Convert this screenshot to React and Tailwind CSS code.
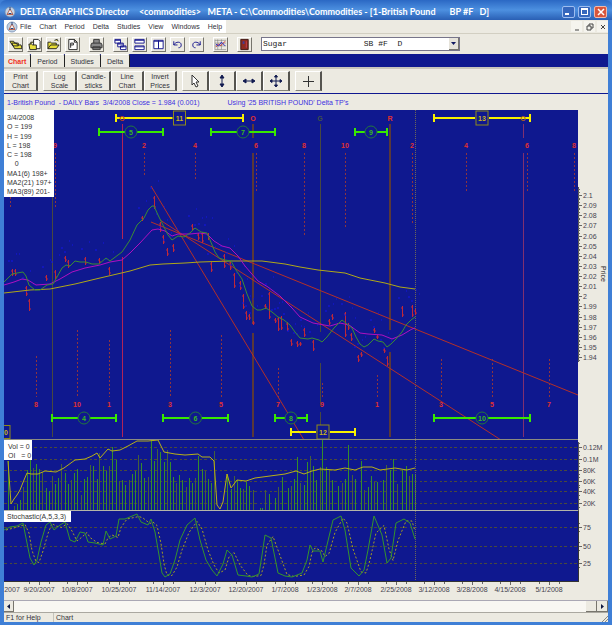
import React from 'react';

const UI_FONT = "font-['Liberation_Sans',Arial,sans-serif]";

const MENU_ITEMS = ['File', 'Chart', 'Period', 'Delta', 'Studies', 'View', 'Windows', 'Help'];

// Price scale, from 2.1 down to 1.94
const PRICE_LABELS = ['2.1', '2.09', '2.08', '2.07', '2.06', '2.05', '2.04', '2.03', '2.02', '2.01', '2', '1.99', '1.98', '1.97', '1.96', '1.95', '1.94'];

const VOLUME_SCALE = [['0.12M', 447], ['0.1M', 459], ['80K', 470], ['60K', 481], ['40K', 491], ['20K', 503]];

const STOCHASTIC_SCALE = [['75', 527], ['50', 546], ['25', 563]];

const DATES = [
  ['9/20/2007', 39], ['10/8/2007', 77], ['10/25/2007', 119], ['11/14/2007', 163], ['12/3/2007', 205],
  ['12/20/2007', 246], ['1/7/2008', 285], ['1/23/2008', 322], ['2/7/2008', 358], ['2/25/2008', 396],
  ['3/12/2008', 434], ['3/28/2008', 472], ['4/15/2008', 510], ['5/1/2008', 549]
];

// [label, x, start, end] of the dashed turning points
const TOP_POINTS = [
  ['9', 55, 153, 207], ['2', 144, 153, 176], ['4', 195, 153, 179], ['6', 256, 153, 192], ['8', 304, 153, 236],
  ['10', 345, 153, 228], ['2', 412, 153, 225], ['4', 466, 153, 192], ['6', 527, 153, 192], ['8', 574, 153, 192]
];

const BOTTOM_POINTS = [
  ['8', 36, 356], ['10', 77, 330], ['1', 109, 340], ['3', 170, 330], ['5', 221, 335], ['7', 278, 368],
  ['9', 322, 383], ['1', 377, 375], ['3', 441, 359], ['5', 492, 359], ['7', 549, 359]
];

// [label, from, to, y]
const GREEN_RANGES = [
  ['5', 99, 163, 132], ['7', 211, 275, 132], ['9', 355, 387, 132], ['4', 52, 116, 418],
  ['6', 163, 228, 418], ['8', 275, 307, 418], ['10', 434, 530, 418]
];

const YELLOW_RANGES = [['11', 116, 243, 118], ['13', 434, 530, 118], ['12', 291, 355, 432]];

const MA_FAST = '4,282 12,274 17,273 23,272 26,276 29,285 35,290 40,290 47,285 53,284 57,277 62,268 66,265 70,266 75,261 80,262 86,262 92,264 99,264 106,258 110,261 122,252 130,240 137,225 144,218 148,210 152,206 154,206 158,215 163,225 168,235 172,240 178,236 184,237 190,233 195,228 201,232 207,233 210,240 215,252 219,258 225,260 231,261 236,270 242,279 247,294 252,306 257,310 261,310 266,308 272,312 278,317 284,320 290,325 295,332 300,338 308,339 312,338 319,340 322,342 327,337 334,328 342,320 347,324 352,328 356,337 360,344 364,347 368,345 374,339 378,341 383,342 387,347 391,344 396,339 402,332 406,325 411,320 415,317';

const MA_MID = '4,285 14,282 22,279 28,280 36,285 50,284 60,279 72,272 85,268 100,265 110,262 122,260 130,253 140,243 152,230 158,229 165,231 172,236 178,234 190,234 200,233 207,234 214,241 222,246 230,248 238,256 245,266 251,273 258,281 268,287 280,296 292,308 300,317 313,323 330,326 340,323 349,325 360,333 368,334 382,335 392,339 402,335 412,329 415,328';

const MA_SLOW = '4,293 30,290 50,289 75,284 100,278 130,271 150,265 163,264 185,263 200,262 230,261 262,261 285,264 300,267 318,270 345,273 360,278 385,283 400,287 415,289';

const OPEN_INTEREST = '8,461 11,504 14,499 17,495 20,490 24,480 27,473 31,474 38,474 45,471 56,472 64,468 75,460 85,459 92,456 97,453 100,458 108,449 112,451 120,450 128,446 137,441 148,441 158,440 164,452 175,454 185,455 198,454 202,457 210,457 214,461 217,505 220,509 223,502 227,474 231,488 237,480 246,481 255,478 270,476 285,474 296,471 304,474 312,471 320,469 335,470 345,468 355,470 363,467 372,467 380,470 395,468 407,470 415,468';

const STOCHASTIC = [
  [4, 530], [10, 527], [17, 526], [23, 523], [27, 543], [30, 558], [34, 565], [37, 560], [41, 542], [46, 525], [50, 522],
  [54, 530], [60, 525], [65, 522], [70, 540], [75, 542], [80, 532], [85, 533], [88, 542], [95, 543], [103, 545], [106, 531],
  [110, 539], [116, 536], [119, 519], [125, 519], [137, 514], [141, 522], [148, 525], [151, 519], [155, 532], [159, 555],
  [162, 573], [165, 577], [170, 574], [175, 560], [180, 540], [187, 525], [195, 518], [200, 540], [206, 560], [212, 570],
  [217, 576], [223, 564], [227, 550], [232, 555], [238, 575], [246, 576], [252, 577], [259, 574], [262, 555], [265, 535],
  [271, 538], [278, 573], [285, 576], [292, 577], [302, 573], [307, 560], [310, 545], [313, 551], [320, 551], [323, 562],
  [327, 545], [333, 520], [341, 516], [345, 530], [351, 568], [359, 576], [364, 570], [368, 550], [374, 516], [382, 535],
  [387, 563], [391, 558], [396, 523], [404, 519], [410, 523], [415, 539]
];

// [x, high, low]
const PRICE_BARS = [
  [12, 269, 276], [15, 269, 276], [26, 286, 296], [29, 299, 311], [46, 275, 281], [55, 270, 279], [65, 256, 262],
  [68, 260, 268], [85, 257, 265], [99, 258, 264], [109, 267, 275], [142, 216, 221], [154, 196, 209], [160, 222, 232],
  [163, 235, 244], [167, 248, 256], [173, 244, 252], [192, 224, 231], [198, 233, 240], [202, 232, 243], [208, 233, 240],
  [211, 262, 272], [224, 254, 268], [230, 261, 270], [234, 273, 288], [240, 281, 290], [243, 294, 309], [246, 311, 320],
  [249, 314, 320], [253, 321, 325], [265, 304, 309], [269, 292, 319], [275, 318, 323], [278, 317, 331], [281, 316, 330],
  [287, 322, 331], [291, 339, 346], [297, 341, 347], [300, 342, 346], [304, 328, 337], [313, 340, 351], [329, 319, 325],
  [332, 314, 320], [345, 312, 337], [348, 323, 330], [351, 333, 341], [358, 355, 362], [361, 352, 357], [374, 328, 333],
  [377, 335, 339], [384, 348, 353], [387, 356, 366], [402, 306, 317], [412, 305, 317], [415, 309, 315]
];

// [x, top]
const VOLUME_BARS = [
  [8, 461], [14, 506], [17, 504], [20, 500], [23, 487], [27, 470], [30, 460], [33, 468], [36, 464], [39, 469], [42, 472],
  [46, 488], [49, 491], [52, 476], [55, 484], [58, 478], [61, 464], [65, 473], [68, 484], [71, 480], [74, 473], [77, 469],
  [81, 495], [84, 479], [87, 477], [90, 465], [93, 466], [97, 479], [99, 453], [103, 466], [106, 471], [109, 466],
  [112, 447], [116, 460], [119, 481], [122, 480], [125, 485], [129, 480], [132, 474], [135, 471], [138, 455], [141, 463],
  [144, 478], [148, 477], [151, 440], [154, 461], [157, 449], [160, 452], [164, 462], [167, 450], [170, 462], [173, 477],
  [176, 483], [179, 475], [182, 480], [186, 487], [189, 478], [192, 483], [195, 478], [198, 456], [202, 469], [205, 471],
  [208, 479], [211, 483], [214, 451], [227, 474], [231, 489], [234, 476], [237, 480], [240, 488], [243, 489], [246, 482],
  [249, 486], [253, 490], [260, 508], [262, 508], [265, 490], [269, 494], [275, 498], [278, 487], [282, 477], [288, 488],
  [291, 486], [294, 479], [297, 457], [300, 483], [304, 485], [307, 462], [310, 456], [313, 466], [316, 480], [320, 467],
  [322, 440], [326, 467], [329, 470], [332, 480], [338, 486], [342, 483], [345, 479], [348, 445], [352, 475], [355, 479],
  [361, 461], [364, 490], [368, 487], [371, 476], [374, 482], [377, 482], [383, 480], [386, 465], [390, 470], [393, 459],
  [397, 484], [402, 470], [406, 466], [409, 476], [412, 474], [415, 474]
];

const toPoints = (data) => data.map(([x, y]) => `${x},${y}`).join(' ');

// Slow line: the average of two readings, which trails the fast one
const slowLine = STOCHASTIC.map(([x, y], i) => {
  const previous = STOCHASTIC[Math.max(i - 1, 0)][1];
  return [Math.min(x + 2, 415), (y + previous) / 2];
});

const AppIcon = () => (
  <svg className="w-3 h-3 shrink-0" viewBox="0 0 12 12" fill="none">
    <circle cx="6" cy="6" r="5" fill="#c5d3e3" stroke="#6d89b0" strokeWidth="0.8" />
    <path d="M6 3 9 8.500H3z" fill="#f4f4f4" stroke="#b0472f" strokeWidth="0.8" />
    <path d="M6 1v3M4.500 7.500h3" stroke="#28477d" />
  </svg>
);

const TOOL_GROUPS = [
  [
    ['Open', <path key="p" d="M1 3h4l1 2h4v3H4zM3 5h5l1 2h4l1 4H6z" fill="#e8e03c" stroke="#222" />],
    ['Open chart', <g key="p" stroke="#222"><path d="M6 1h5l2 2v8H6z" fill="#fff" /><path d="M1 6h3l1 1h4v5H2zM3 6V4h3" fill="#e8e03c" /></g>],
    ['Open folder', <path key="p" d="M1 11V4h3l1 1h5v2M1 11l3-4h9l-3 4zM8 2l3-1 1 2" fill="#e9df35" stroke="#222" />],
    ['Page', <path key="p" d="M3 1h6l3 3v8H3zM9 1v3h3M5 10V5h3v2H5" fill="#fff" stroke="#222" />]
  ],
  [
    ['Print', <path key="p" d="M4 5V1h6v4M2 5h10l1 2v3H1V7zM3 9h8v3H3z" fill="#888" stroke="#333" />]
  ],
  [
    ['Cascade', <g key="p"><path d="M1 1h6v4H1zM4 5h6v4H4zM7 8h6v4H7z" fill="#fff" stroke="#14148c" /><path d="M1 2h6M4 6h6M7 9h6" stroke="#14148c" /></g>],
    ['Tile rows', <path key="p" d="M2 1h10v4H2zM2 8h10v4H2zM2 2h10M2 9h10" fill="#fff" stroke="#14148c" />],
    ['Tile columns', <path key="p" d="M2 2h5v9H2zM7 2h5v9H7zM2 3h10" fill="#fff" stroke="#14148c" />],
    ['Undo', <path key="p" d="M3 3v4h4M3 7c2-4 8-4 8 0 0 2-1 3-3 3" fill="none" stroke="#14148c" />],
    ['Redo', <path key="p" d="M11 3v4H7M11 7C9 3 3 3 3 7c0 2 1 3 3 3" fill="none" stroke="#14148c" />]
  ],
  [
    ['Draw chart', <g key="p" fill="none"><path d="M1 1v11h12M1 2h12M1 5h12M1 8h12M4 1v11M8 1v11" stroke="#777" strokeWidth="0.6" /><path d="m2 9 3-3 2 2 5-5" stroke="#c22" /><path d="m2 6 3 2 3-4 4 4" stroke="#22c" /></g>]
  ],
  [
    ['Exit', <g key="p"><path d="M3 1h8v11H3z" fill="#8c2a20" stroke="#3c1410" /><path d="M5 3h2v3H5zM8 8h1v1H8z" fill="#473a91" /><path d="M9 3v7" stroke="#d45" strokeWidth="0.8" /></g>]
  ]
];

const ToolButton = ({ label, children }) => (
  <button aria-label={label} className="w-[15px] h-[15px] mr-1 border-r border-b border-[#77756d] border-t border-t-white border-l border-l-white flex items-center justify-center">
    <svg className="w-[13px] h-[13px] shrink-0" viewBox="0 0 14 13">{children}</svg>
  </button>
);

const CURSOR_TOOLS = [
  ['Pointer', <path key="p" d="M5 2v10l2-2 2 4 2-1-2-4h3z" fill="#fff" stroke="#333" />],
  ['Vertical', <path key="p" d="M8 3v10M8 2 6 5h4zM8 14l2-3H6z" fill="#111a50" stroke="#111a50" />],
  ['Horizontal', <path key="p" d="M3 8h10M2 8l3 2V6zM14 8l-3-2v4z" fill="#111a50" stroke="#111a50" />],
  ['Move', <path key="p" d="M8 3v10M3 8h10M8 2 6.500 4h3zM8 14l1.500-2h-3zM2 8l2 1.500v-3zM14 8l-2-1.500v3z" fill="#111a50" stroke="#111a50" />]
];

const PushButton = ({ className = '', children, ...rest }) => (
  <button className={`h-full border-t border-l border-white border-r-2 border-r-[#55544f] border-b border-b-[#85837b] flex items-center justify-center text-center ${className}`} {...rest}>
    {children}
  </button>
);

const TitleBar = () => (
  <header className="h-5 pl-1 pr-[5px] pt-[3px] flex items-center bg-linear-to-b from-[#2b68c4] via-[#4d90e0] to-[#2a5fb4] rounded-t-md">
    <AppIcon />
    <h1 className="ml-1 flex gap-[10px] font-['Lato','Liberation_Sans',sans-serif] font-bold text-[9px] text-white whitespace-nowrap">
      <span>DELTA GRAPHICS Director</span>
      <span>&lt;commodities&gt;&nbsp;&nbsp; META - C:\Commodities\Commodities - [1-British Pound</span>
      <span className="pl-1">BP #F&nbsp;&nbsp; D]</span>
    </h1>
    <div className="ml-auto flex gap-[3px]">
      <button aria-label="Minimize" className="w-[13px] h-3 rounded-xs border border-[#9dbdf0] bg-[#3567bd] flex items-end p-[2px]">
        <span className="w-1 h-[2px] bg-white" />
      </button>
      <button aria-label="Maximize" className="w-[13px] h-3 rounded-xs border border-[#9dbdf0] bg-[#3567bd] flex items-center justify-center">
        <span className="w-[7px] h-[7px] border border-t-2 border-white" />
      </button>
      <button aria-label="Close" className="w-[13px] h-3 rounded-xs border border-[#f2b8a8] bg-[#d9553b] flex items-center justify-center">
        <svg className="w-2 h-2" viewBox="0 0 8 8"><path d="m1 1 6 6M7 1 1 7" stroke="#fff" strokeWidth="1.5" /></svg>
      </button>
    </div>
  </header>
);

const MenuBar = () => (
  <nav className="h-[13px] flex items-center">
    <div className="h-full pl-[2px] pr-1 flex items-center bg-white">
      <AppIcon />
      <div className="flex gap-2 ml-[2px]">
        {MENU_ITEMS.map((item) => (
          <button key={item}>{item}</button>
        ))}
      </div>
    </div>
    <div className="ml-auto flex gap-[2px]">
      {[['Minimize chart', 'M2 7h4'], ['Restore chart', 'M3 3V1h4v4H5M1 3h4v4H1z'], ['Close chart', 'm2 2 4 4M6 2 2 6']].map(([label, d]) => (
        <button key={label} aria-label={label} className="w-[11px] h-[11px] bg-[#f5f4ee] flex items-center justify-center">
          <svg className="w-2 h-2" viewBox="0 0 8 8"><path d={d} fill="none" stroke="#444" /></svg>
        </button>
      ))}
    </div>
  </nav>
);

const Toolbar = () => (
  <div className="h-[21px] pl-1 flex items-center border-t border-[#d2cfc2]">
    {TOOL_GROUPS.map((group, i) => (
      <div key={i} className="flex mr-[5px]">
        {group.map(([label, icon]) => (
          <ToolButton key={label} label={label}>{icon}</ToolButton>
        ))}
      </div>
    ))}
    <div className="relative w-[199px]">
      <select aria-label="Commodity" className="appearance-none block w-full h-[14px] pl-px border border-[#77758a] bg-white font-['Liberation_Mono',monospace] text-[8px] leading-[10px] text-[#222]">
        <option>{'Sugar' + '\u00a0'.repeat(16) + 'SB #F\u00a0 D'}</option>
      </select>
      <span className="absolute right-[1px] top-[1px] w-[10px] h-3 bg-[#e6e3da] border-r border-b border-[#77756d] flex items-center justify-center pointer-events-none">
        <svg className="w-[5px] h-[3px]" viewBox="0 0 5 3"><path d="M0 0h5L2.500 3z" fill="#101860" /></svg>
      </span>
    </div>
  </div>
);

const Tabs = () => (
  <div role="tablist" className="h-[13px] flex bg-[#0f188f]">
    {['Chart', 'Period', 'Studies', 'Delta'].map((tab) => (
      <button
        key={tab}
        role="tab"
        aria-selected={tab === 'Chart'}
        className={`border-r border-r-[#222] border-t border-t-white bg-[#eceae1] rounded-tr-xs ${tab === 'Chart' ? 'px-1 font-bold text-[#f03020]' : 'px-[6px]'}`}
      >
        {tab}
      </button>
    ))}
  </div>
);

const ChartButtons = () => (
  <div className="h-[27px] py-[2px] flex items-center border-t-2 border-[#c9c6bc] border-b border-b-[#0f188f] leading-[9px]">
    <PushButton className="w-[34px]">Print<br />Chart</PushButton>
    <PushButton className="w-[34px] ml-[5px]">Log<br />Scale</PushButton>
    <PushButton className="w-[34px]">Candle-<br />sticks</PushButton>
    <PushButton className="w-[33px]">Line<br />Chart</PushButton>
    <PushButton className="w-[33px] mr-[5px]">Invert<br />Prices</PushButton>
    {CURSOR_TOOLS.map(([label, icon]) => (
      <PushButton key={label} aria-label={label} className="w-[27px]">
        <svg className="w-4 h-4" viewBox="0 0 16 16">{icon}</svg>
      </PushButton>
    ))}
    <PushButton aria-label="Crosshair" className="w-[27px] ml-[5px]">
      <svg className="w-4 h-4" viewBox="0 0 16 16"><path d="M8.500 3v11M3 8.500h11" stroke="#333" /></svg>
    </PushButton>
  </div>
);

const Today = ({ from, to }) => (
  <line x1="415.500" x2="415.500" y1={from} y2={to} stroke="#6c6858" strokeDasharray="1 1" />
);

// Full height cycle lines, with the gaps the bars leave in them
const CycleLine = ({ x, color, width = 1, parts }) => (
  <g stroke={color} strokeWidth={width}>
    {parts.map(([a, b]) => <line key={a} x1={x} x2={x} y1={a} y2={b} />)}
  </g>
);

const Range = ({ label, from, to, y, square }) => {
  const mid = (from + to) / 2;
  const r = square ? 7 : 6;
  const color = square ? '#f8f000' : '#38e800';
  return (
    <g>
      <path d={`M${from} ${y}H${mid - r}M${mid + r} ${y}H${to}`} stroke={color} strokeWidth="2" />
      <path d={`M${from} ${y - 4}v8M${to} ${y - 4}v8`} stroke={color} strokeWidth="2" />
      {square ? (
        <rect x={mid - 6} y={y - 7} width="12" height="14" fill="#0f188f" stroke="#8f8a18" />
      ) : (
        <circle cx={mid} cy={y} r={r} fill="#0f188f" stroke="#23783c" />
      )}
      <text x={mid} y={y + 3} textAnchor="middle" fill={square ? '#c8b420' : '#38b820'}>{label}</text>
    </g>
  );
};

const PricePanel = () => (
  <div className="relative">
    <svg className="block w-full text-[7px]" viewBox="4 110 604 330" fill="none">
      <rect x="4" y="110" width="574" height="330" fill="#0f188f" />

      {/* Cycle lines */}
      <CycleLine x={52.5} color="#484840" parts={[[196, 437]]} />
      <CycleLine x={122.5} color="#b02458" parts={[[124, 239], [257, 437]]} />
      <CycleLine x={253} color="#5a3838" width={2} parts={[[124, 138], [153, 324], [333, 437]]} />
      <CycleLine x={320.5} color="#484840" parts={[[124, 332], [363, 406], [412, 426]]} />
      <CycleLine x={390} color="#5a3838" width={2} parts={[[124, 330], [352, 437]]} />
      <CycleLine x={523.5} color="#803070" parts={[[124, 138], [153, 437]]} />
      <Today from={110} to={440} />

      {/* Trend lines */}
      <g stroke="#b43028">
        <path d="M151 186 304 440" />
        <path d="M151 222 578 395" />
        <path d="M160 220 501 440" />
      </g>

      {/* Daily bars */}
      <g stroke="#c02838">
        {PRICE_BARS.map(([x, high, low]) => (
          <path key={x} d={`M${x + 0.5} ${high}V${low}M${x - 1} ${high + 2}h2M${x} ${low - 2}h2`} />
        ))}
      </g>
      <g stroke="#1414e8">
        {PRICE_BARS.map(([x, high]) => (
          <path key={x} d={`M${x - 3} ${high - 9}v2M${x + 4} ${high - 15}h1`} />
        ))}
      </g>

      {/* Moving averages */}
      <polyline points={MA_SLOW} stroke="#b0a818" />
      <polyline points={MA_MID} stroke="#b010c0" />
      <polyline points={MA_FAST} stroke="#3a8c34" />

      {/* Turning points */}
      <g fill="#e03030" fontWeight="bold" textAnchor="middle">
        {TOP_POINTS.map(([label, x, from, to]) => (
          <g key={x}>
            <line x1={x + 0.5} x2={x + 0.5} y1={from} y2={to} stroke="#8c3440" strokeDasharray="2 2" />
            <text x={x} y="148">{label}</text>
          </g>
        ))}
        {BOTTOM_POINTS.map(([label, x, from]) => (
          <g key={x}>
            <line x1={x + 0.5} x2={x + 0.5} y1={from} y2="397" stroke="#8c3440" strokeDasharray="2 2" />
            <text x={x} y="407">{label}</text>
          </g>
        ))}
        <path d="M10.500 197v10" stroke="#8c3440" strokeDasharray="2 2" />
        <text x="253" y="121">O</text>
        <text x="320" y="121" fill="#405048">G</text>
        <text x="390" y="121">R</text>
      </g>

      <g fontWeight="bold">
        {GREEN_RANGES.map(([label, from, to, y]) => (
          <Range key={label} label={label} from={from} to={to} y={y} />
        ))}
        {YELLOW_RANGES.map(([label, from, to, y]) => (
          <Range key={label} label={label} from={from} to={to} y={y} square />
        ))}
        <rect x="3" y="425.500" width="7" height="13" stroke="#8f8a18" />
        <text x="4" y="435" fill="#c8b420">0</text>
        <text x="122" y="121" fill="#c04020" textAnchor="middle">O</text>
        <text x="523" y="121" fill="#b06020" textAnchor="middle">O</text>
      </g>

      {/* Price scale */}
      <path d="M578.500 187V362" stroke="#555" />
      {PRICE_LABELS.map((label, i) => {
        const y = 195 + Math.round(i * 10.13);
        return (
          <g key={label}>
            <path d={`M578 ${y + 0.5}h4M578 ${y - 2.5}h2M578 ${y - 5.5}h2M578 ${y + 3.5}h2`} stroke="#666" />
            <text x="583" y={y + 3} fill="#44424e">{label}</text>
          </g>
        );
      })}
      <text x="603" y="266" fill="#222" style={{ writingMode: 'vertical-rl' }}>Price</text>
      <path d="M4 439.500H578" stroke="#8a8a80" />
    </svg>
    <div className="absolute left-0 top-0 w-[50px] h-[87px] pl-[3px] pt-[3px] pb-[1px] flex flex-col justify-between bg-white text-[#333] leading-[9px] whitespace-pre overflow-hidden">
      <span>3/4/2008</span>
      <span>O = 199</span>
      <span>H = 199</span>
      <span>L = 198</span>
      <span>C = 198</span>
      <span>{'    0'}</span>
      <span>MA1(6) 198+</span>
      <span>MA2(21) 197+</span>
      <span>MA3(89) 201-</span>
    </div>
  </div>
);

const ScaleRows = ({ rows }) => rows.map(([label, y]) => (
  <g key={label}>
    <line x1="4" x2="578" y1={y + 0.5} y2={y + 0.5} stroke="#4a4a3c" strokeDasharray="3 3 2 2" />
    <path d={`M578 ${y + 0.5}h4M578 ${y - 3.5}h2M578 ${y + 4.5}h2`} stroke="#666" />
    <text x="583" y={y + 3} fill="#44424e">{label}</text>
  </g>
));

const VolumePanel = () => (
  <div className="relative">
    <svg className="block w-full text-[7px]" viewBox="4 440 604 71" fill="none">
      <rect x="4" y="440" width="574" height="71" fill="#0f188f" />
      <ScaleRows rows={VOLUME_SCALE} />
      {VOLUME_BARS.map(([x, top], i) => (
        <line key={x} x1={x + 0.5} x2={x + 0.5} y1={top} y2="510" stroke={i % 3 === 1 ? '#44603c' : '#348c2c'} />
      ))}
      <polyline points={OPEN_INTEREST} stroke="#b8b018" />
      <Today from={440} to={511} />
      <path d="M578.500 442V511" stroke="#555" />
      <path d="M4 510.500H578" stroke="#b4b4a8" />
    </svg>
    <div className="absolute left-0 top-0 w-7 h-5 pl-1 pt-[2px] bg-white text-[#333] leading-[9px] whitespace-pre">
      <p>Vol = 0</p>
      <p>{'OI   = 0'}</p>
    </div>
  </div>
);

const StochasticPanel = () => (
  <div className="relative">
    <svg className="block w-full text-[7px]" viewBox="4 511 604 89" fill="none">
      <rect x="4" y="511" width="574" height="70" fill="#0f188f" />
      <ScaleRows rows={STOCHASTIC_SCALE} />
      <polyline points={toPoints(slowLine)} stroke="#a8a020" strokeDasharray="2 2" />
      <polyline points={toPoints(STOCHASTIC)} stroke="#34942c" />
      <Today from={511} to={581} />
      <path d="M578.500 511V581M4 581.500H579" stroke="#333" />
      <g fill="#44424e" textAnchor="middle">
        <text x="12" y="592">2007</text>
        {DATES.map(([label, x]) => (
          <g key={label}>
            <path d={`M${x + 0.5} 582v3M${x - 9.5} 582v2M${x + 10.5} 582v2`} stroke="#666" />
            <text x={x} y="592">{label}</text>
          </g>
        ))}
      </g>
    </svg>
    <div className="absolute left-0 top-0 w-[67px] h-[11px] pl-[3px] bg-white text-[#333] leading-[11px] whitespace-nowrap">
      Stochastic(A,5,3,3)
    </div>
  </div>
);

const ScrollBar = () => (
  <div className="h-3 flex border-t border-[#aaa8b4] bg-[#f8f7f2]">
    <button aria-label="Scroll left" className="w-[10px] bg-[#eceae1] border-r border-b border-[#77756d] flex items-center justify-center">
      <svg className="w-[3px] h-[5px]" viewBox="0 0 3 5"><path d="M3 0v5L0 2.500z" fill="#101840" /></svg>
    </button>
    <div className="ml-auto w-[11px] bg-[#eceae1] border-r border-b border-[#77756d]" />
    <button aria-label="Scroll right" className="w-[11px] bg-[#eceae1] border-r border-b border-[#77756d] flex items-center justify-center">
      <svg className="w-[3px] h-[5px]" viewBox="0 0 3 5"><path d="M0 0v5l3-2.500z" fill="#101840" /></svg>
    </button>
  </div>
);

const App = () => {
  return (
    <div className={`${UI_FONT} min-h-screen bg-[#3f7fd6] text-[7px] leading-[9px] text-[#33323a]`}>
      <TitleBar />
      <main className="mx-1 bg-[#eceae1]">
        <MenuBar />
        <Toolbar />
        <Tabs />
        <ChartButtons />
        <p className="h-4 pl-[3px] flex items-center gap-7 text-[#4030e0] whitespace-pre">
          <span>{'1-British Pound  - DAILY Bars  3/4/2008 Close = 1.984 (0.001)'}</span>
          <span>Using '25 BRITISH POUND' Delta TP's</span>
        </p>
        <PricePanel />
        <VolumePanel />
        <StochasticPanel />
        <ScrollBar />
        <footer className="h-[10px] flex items-center border-t border-[#aaa8a0]">
          <span className="w-[50px] pl-[2px] border-r border-[#c5c3ba]">F1 for Help</span>
          <span className="pl-[2px]">Chart</span>
          <svg className="ml-auto w-2 h-2" viewBox="0 0 8 8"><path d="M8 2 2 8M8 5 5 8" stroke="#8a8880" /></svg>
        </footer>
      </main>
    </div>
  );
};

export default App;
